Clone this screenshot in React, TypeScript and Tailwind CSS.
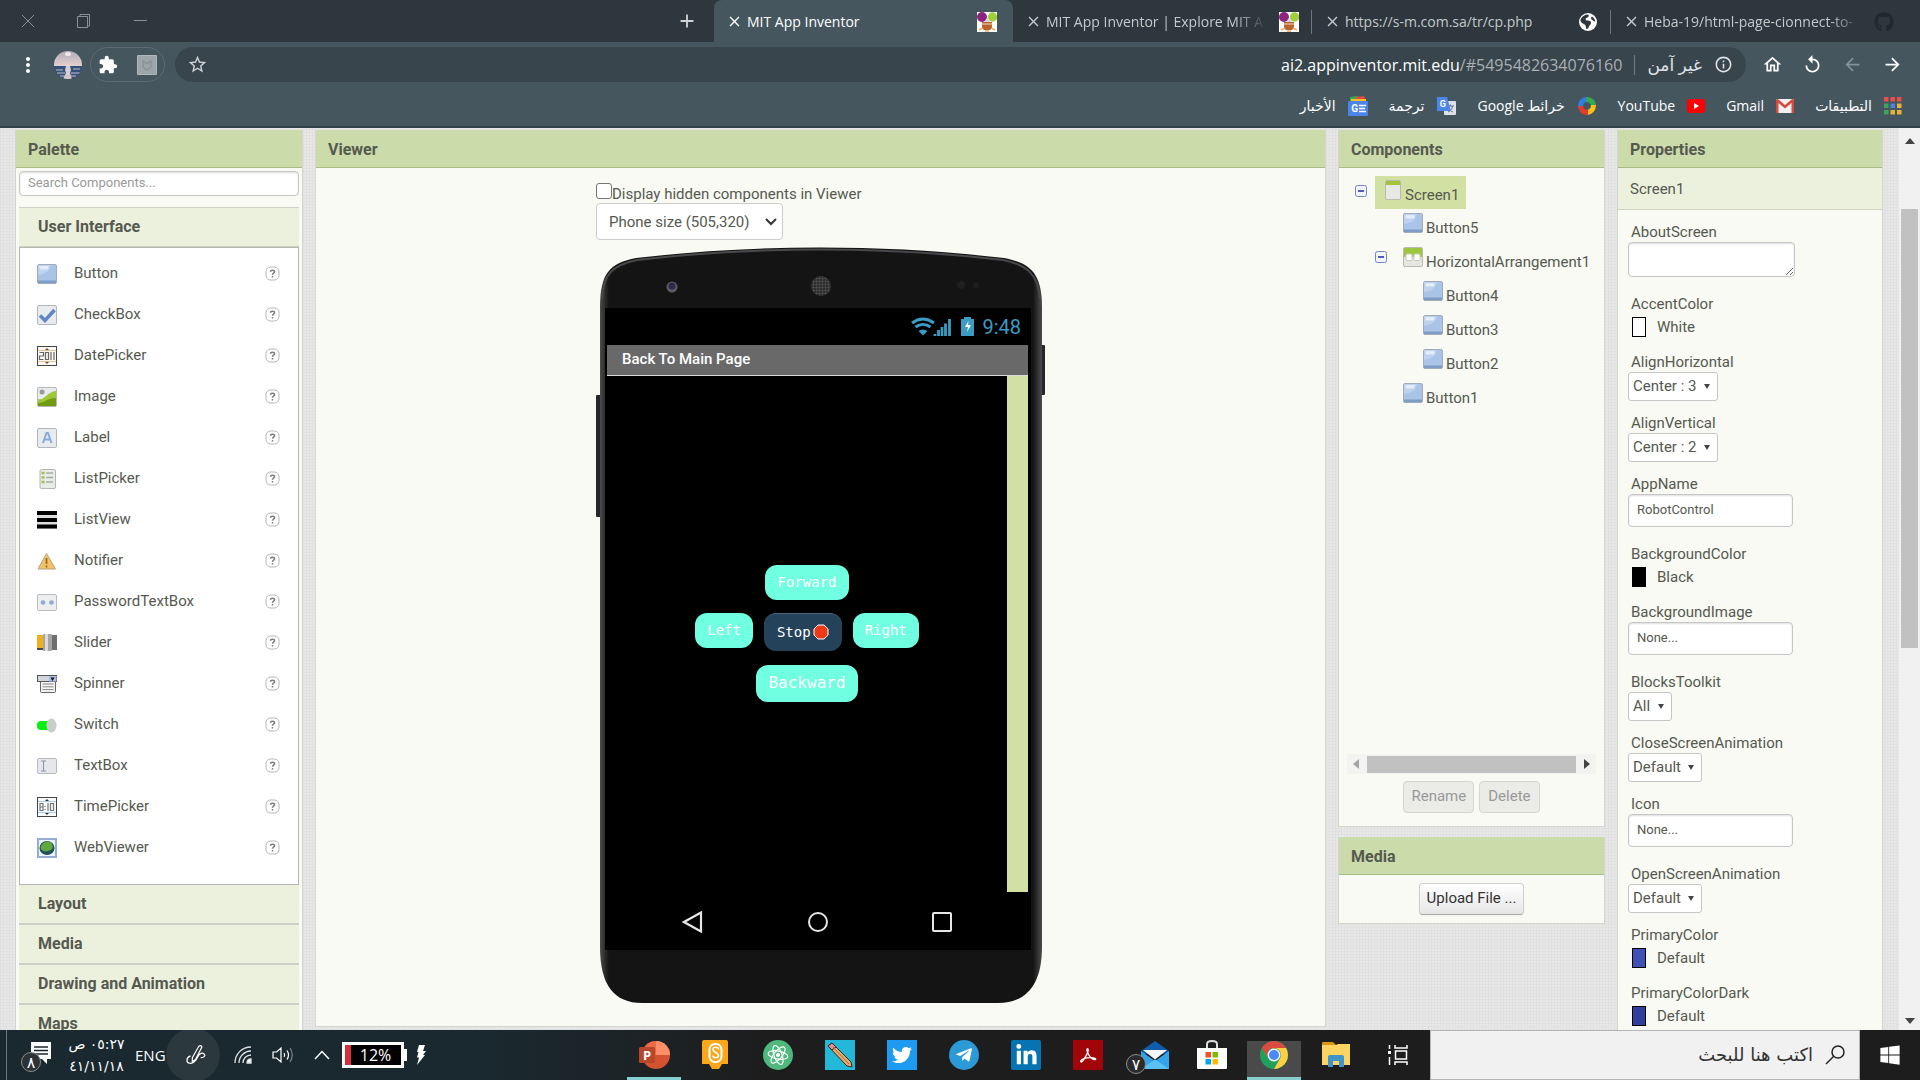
import React from "react";
import { FaGithub, FaTwitter, FaTelegramPlane, FaLinkedinIn, FaWindows } from "react-icons/fa";
import { MdExtension, MdStarBorder, MdClose, MdAdd, MdOutlineHome, MdReplay, MdArrowBack, MdArrowForward, MdInfoOutline, MdMoreVert } from "react-icons/md";

const UI = "font-['Open_Sans','DejaVu_Sans',sans-serif]";

/* ---------- browser window ---------- */

function InventorFavicon() {
  return (
    <svg viewBox="0 0 20 20" className="size-5 shrink-0" aria-hidden="true">
      <rect width="20" height="20" fill="#fff" />
      <circle cx="5" cy="5" r="5" fill="#8e2380" />
      <circle cx="15.5" cy="5" r="4.7" fill="#a0cf3c" />
      <path d="M10 6l3 4H7z" fill="#d9d0e0" />
      <path d="M5 10h10v6l-2 2H7l-2-2z" fill="#b7642f" />
      <path d="M5 12h10" stroke="#e8c9a8" strokeWidth="1.2" />
      <path d="M2 18l4-2M18 18l-4-2M8 19h4" stroke="#f0a868" strokeWidth="1.5" />
    </svg>
  );
}

function GlobeFavicon() {
  return (
    <svg viewBox="0 0 20 20" className="size-5 shrink-0" aria-hidden="true">
      <circle cx="10" cy="10" r="9" fill="#fff" />
      <path d="M9 2.500c3 .5 2 2.500-.2 3.200C7 6.500 7.500 8.500 9.500 8.500c3 0 3.500 1 3.500 2.500s-1.500 2-2 3.500-1.500 3-2.500 2.500-.2-3-1.500-4.200S3 11 2.500 9 5 3 9 2.500z" fill="#2d373d" />
      <path d="M14 4.500c1.800 1 3 3 3.300 5-1.800.2-2.300-1-3.300-1.700s-1.500-2.300 0-3.300z" fill="#2d373d" />
    </svg>
  );
}

type TabProps = { title: string; active?: boolean; faded?: boolean; divider?: boolean; icon: React.ReactNode };

function Tab({ title, active, faded, divider, icon }: TabProps) {
  return (
    <div
      className={
        "flex h-full w-[299px] shrink-0 items-center pt-px pr-4 pl-3 " +
        (active ? "rounded-t-lg bg-[#45565f] text-white" : "text-[#c4c9cb]")
      }
    >
      <button type="button" aria-label={"Close " + title} className="mr-1 shrink-0">
        <MdClose className="size-[17px]" />
      </button>
      <a
        href="#tab"
        className={
          "min-w-0 flex-1 text-sm whitespace-nowrap " +
          (faded ? "[mask-image:linear-gradient(to_right,black_85%,transparent)]" : "")
        }
      >
        {title}
      </a>
      <span className="ml-3">{icon}</span>
      {divider && <span className="-mr-4 ml-3 h-6 w-px bg-[#6d767b]" />}
    </div>
  );
}

function TabStrip() {
  return (
    <div className="flex h-[42px] items-center bg-[#2d373d] text-[#8a9296]">
      <div className="flex items-center gap-10 pl-5">
        <button type="button" aria-label="Close window">
          <svg viewBox="0 0 16 16" className="size-4" stroke="currentColor" fill="none"><path d="M2 2l12 12M14 2L2 14" /></svg>
        </button>
        <button type="button" aria-label="Restore window">
          <svg viewBox="0 0 16 16" className="size-4" stroke="currentColor" fill="none"><path d="M1.500 3.500h10v11h-10zM4 3V1.500h9.500V13H12" /></svg>
        </button>
        <button type="button" aria-label="Minimise window">
          <svg viewBox="0 0 16 16" className="size-4" stroke="currentColor" fill="none"><path d="M2 7.500h13" /></svg>
        </button>
      </div>
      <button type="button" aria-label="New tab" className="mr-4 ml-auto text-[#cfd3d5]">
        <MdAdd className="size-[22px]" />
      </button>
      <div className="flex h-full pr-2.5">
        <Tab active title="MIT App Inventor" icon={<InventorFavicon />} />
        <Tab faded divider title="MIT App Inventor | Explore MIT A" icon={<InventorFavicon />} />
        <Tab divider title="https://s-m.com.sa/tr/cp.php" icon={<GlobeFavicon />} />
        <Tab faded title="Heba-19/html-page-cionnect-to-" icon={<FaGithub className="size-5 text-[#20292e]" />} />
      </div>
    </div>
  );
}

function Toolbar() {
  return (
    <div className="flex h-[45px] items-center bg-[#45565f] text-white">
      <button type="button" aria-label="Menu" className="ml-4">
        <MdMoreVert className="size-6" />
      </button>
      <button type="button" aria-label="Profile" className="ml-[14px]">
        <svg viewBox="0 0 28 28" className="size-7">
          <defs>
            <clipPath id="avatar"><circle cx="14" cy="14" r="14" /></clipPath>
            <linearGradient id="sky" x2="0" y2="1">
              <stop offset="0" stopColor="#b0acb8" />
              <stop offset="1" stopColor="#e6d0cc" />
            </linearGradient>
          </defs>
          <g clipPath="url(#avatar)">
            <rect width="28" height="15" fill="url(#sky)" />
            <ellipse cx="14" cy="3" rx="3" ry="2" fill="#ece6ea" />
            <rect y="15" width="28" height="13" fill="#35507a" />
            <path d="M12 15h4l1 4-1 3 2 6H9l3-6-1-3z" fill="#e8dcd8" opacity=".9" />
            <path d="M2 19h7M19 18h7M3 22h8M17 22h9M6 25h16" stroke="#c5bcc6" />
          </g>
        </svg>
      </button>
      <div className="ml-2 flex h-[35px] w-[75px] items-center justify-between rounded-full border border-[#5c6b74] px-[7px]">
        <button type="button" aria-label="Extensions"><MdExtension className="size-5" /></button>
        <button type="button" aria-label="McAfee">
          <svg viewBox="0 0 20 20" className="size-5">
            <rect width="20" height="20" rx="1" fill="#9ca5a9" />
            <rect x=".5" y=".5" width="19" height="19" rx="1" fill="none" stroke="#b0b8bb" />
            <path d="M6 6l4 2.500L14 6v6l-4 3-4-3z" fill="none" stroke="#8b9599" strokeWidth="1.500" />
          </svg>
        </button>
      </div>
      <div className="ml-2.5 flex h-[35px] min-w-0 flex-1 items-center rounded-full bg-[#39454c] pr-[13px] pl-3">
        <button type="button" aria-label="Bookmark this page"><MdStarBorder className="size-[21px] text-[#cdd3d6]" /></button>
        <div className="ml-auto text-base whitespace-nowrap">
          ai2.appinventor.mit.edu<span className="text-[#a9b0b4]">/#5495482634076160</span>
        </div>
        <span className="mx-3 h-5 w-px bg-[#707b81]" />
        <span dir="rtl" className="text-[17px] whitespace-nowrap text-[#dfe3e5]">غير آمن</span>
        <MdInfoOutline className="ml-3 size-[19px] text-[#dfe3e5]" />
      </div>
      <div className="ml-4 flex items-center gap-[19px] pr-[17px]">
        <button type="button" aria-label="Home"><MdOutlineHome className="size-[21px]" /></button>
        <button type="button" aria-label="Reload"><MdReplay className="size-[21px]" /></button>
        <button type="button" aria-label="Back"><MdArrowBack className="size-[21px] text-[#82909a]" /></button>
        <button type="button" aria-label="Forward"><MdArrowForward className="size-[21px]" /></button>
      </div>
    </div>
  );
}

const bookmarks: { text: string; icon: React.ReactNode }[] = [
  {
    text: "التطبيقات",
    icon: (
      <svg viewBox="0 0 18 18" className="size-[18px]">
        {["#e8514a", "#e8514a", "#e8514a", "#3fa35c", "#4688e0", "#e5b23c", "#3fa35c", "#e5b23c", "#e5b23c"].map((c, i) => (
          <rect key={i} x={(i % 3) * 6.5} y={Math.floor(i / 3) * 6.5} width="4.5" height="4.5" fill={c} />
        ))}
      </svg>
    ),
  },
  {
    text: "Gmail",
    icon: (
      <svg viewBox="0 0 18 18" className="size-[18px]">
        <rect y="2" width="18" height="14" rx="1" fill="#f1f1f1" />
        <path d="M0 16V3.500C0 2 1.500 1.800 2.500 2.500L9 8l6.500-5.500c1-.7 2.500-.5 2.500 1V16h-2.500V6L9 11.500 2.500 6v10z" fill="#d54b3d" />
      </svg>
    ),
  },
  {
    text: "YouTube",
    icon: (
      <svg viewBox="0 0 18 18" className="size-[18px]">
        <rect y="2" width="18" height="14" rx="3" fill="#f00" />
        <path d="M7 6l5 3-5 3z" fill="#fff" />
      </svg>
    ),
  },
  {
    text: "خرائط Google",
    icon: (
      <svg viewBox="0 0 20 20" className="size-5" fill="none" strokeWidth="5">
        <path d="M3.500 11A6.500 6.500 0 0 1 10 3.500" stroke="#2f7de1" />
        <path d="M9 3.500c4 0 7 2 7.500 6" stroke="#35a853" />
        <path d="M16.500 9c0 4-2.500 7-6.500 7.500" stroke="#fbc116" />
        <path d="M11 16.500c-4 0-7-2-7.500-6.500" stroke="#e33b2e" />
      </svg>
    ),
  },
  {
    text: "ترجمة",
    icon: (
      <svg viewBox="0 0 20 20" className="size-5">
        <rect x="8" y="5" width="12" height="14" rx="1" fill="#dfe2e6" />
        <path d="M11 10h7M14.500 8.500V10M12 16c3-1 4-3 4.500-6M12.500 12c1 2 2.500 3.500 4.500 4" stroke="#6b7783" fill="none" />
        <path d="M1 1h10l4 14H1z" fill="#4a86e8" />
        <text x="10" y="11" fontSize="9" fontFamily="Roboto" fontWeight="700" fill="#fff">G</text>
      </svg>
    ),
  },
  {
    text: "الأخبار",
    icon: (
      <svg viewBox="0 0 20 20" className="size-5">
        <path d="M2 1l8-1v6H2z" fill="#35a853" />
        <path d="M8 1l8-1 2 6H8z" fill="#e5473a" />
        <path d="M3 3h15v5H3z" fill="#f6bf26" />
        <rect y="5" width="20" height="15" rx="1" fill="#4a86e8" />
        <text x="10" y="16" fontSize="10" fontFamily="Roboto" fontWeight="700" fill="#fff">G</text>
        <path d="M11 9.500h7M11 12.500h6M11 15.500h7" stroke="#fff" strokeWidth="1.5" />
      </svg>
    ),
  },
];

function BookmarksBar() {
  return (
    <nav dir="rtl" className="flex h-[41px] items-center gap-[21px] border-b-2 border-[#33434d] bg-[#45565f] pr-[18px] pb-0.5 text-sm text-white">
      {bookmarks.map((b) => (
        <a key={b.text} href="#bookmark" className="flex items-center gap-3 whitespace-nowrap">
          {b.icon}
          {b.text}
        </a>
      ))}
    </nav>
  );
}

/* ---------- shared pieces ---------- */

function PanelHeader({ children }: { children: React.ReactNode }) {
  return (
    <h2 className="flex h-[38px] items-center border-b border-[#a9bd84] bg-[#cbdba9] px-3 pt-0.5 text-base font-bold text-[#555950]">
      {children}
    </h2>
  );
}

function ButtonIcon() {
  return (
    <svg viewBox="0 0 20 20" className="size-5 shrink-0">
      <rect x=".5" y=".5" width="19" height="19" rx="1.5" fill="#a9c4e6" stroke="#a0acba" />
      <path d="M1 11C8 10 12 8 14 1H1z" fill="#bcd2ee" />
      <rect x="2.5" y="2" width="9" height="3.5" rx="1" fill="#e3edf9" />
      <path d="M1 16.500h18V19H1z" fill="#7e9cc6" />
    </svg>
  );
}

/* ---------- palette ---------- */

const frame = <rect x=".5" y=".5" width="19" height="19" rx="1.5" fill="#e9ecef" stroke="#b4b8bb" />;

const paletteItems: { name: string; icon: React.ReactNode }[] = [
  { name: "Button", icon: <ButtonIcon /> },
  {
    name: "CheckBox",
    icon: <svg viewBox="0 0 20 20" className="size-5">{frame}<path d="M3 10.500l5 5L17.500 5" fill="none" stroke="#5f87c4" strokeWidth="3.5" /></svg>,
  },
  {
    name: "DatePicker",
    icon: (
      <svg viewBox="0 0 20 20" className="size-5">
        <rect x=".5" y=".5" width="19" height="19" fill="#fdfaf5" stroke="#444" />
        <path d="M1 4.500h18M1 15.500h18" stroke="#e7bd90" />
        <path d="M8 4l2-2 2 2zM8 16l2 2 2-2z" fill="#7a4a2a" />
        <path d="M2.500 6.500h4v3.500h-4v3.500h4M8.500 6.500h3v7h-3zM14 6v8M17 6v8" fill="none" stroke="#666" strokeWidth="1.2" />
      </svg>
    ),
  },
  {
    name: "Image",
    icon: (
      <svg viewBox="0 0 20 20" className="size-5">
        {frame}
        <path d="M1 12c7 2 8-7 18-8v15H1z" fill="#9cc832" />
        <path d="M1 16c7 0 9-5 18-5v8H1z" fill="#6f9a12" />
        <circle cx="5" cy="5" r="2.5" fill="#9a9a9a" />
      </svg>
    ),
  },
  {
    name: "Label",
    icon: <svg viewBox="0 0 20 20" className="size-5">{frame}<path d="M6 15l3.500-10h1.500L14.500 15M7.500 11.500h5.500" fill="none" stroke="#8aaade" strokeWidth="2" /></svg>,
  },
  {
    name: "ListPicker",
    icon: (
      <svg viewBox="0 0 20 20" className="size-5">
        <rect x="3" y=".5" width="15.5" height="19" rx="1.5" fill="#e8ece6" stroke="#b4b8b0" />
        <path d="M9 4h7M9 8.500h7M9 13h7" stroke="#a8aaa6" strokeWidth="1.3" />
        <path d="M4.500 4h3M4.500 8.500h3M4.500 13h3" stroke="#9dc050" strokeWidth="2.5" />
      </svg>
    ),
  },
  {
    name: "ListView",
    icon: (
      <svg viewBox="0 0 20 20" className="size-5">
        <rect y="1" width="20" height="18" fill="#ddd" />
        <path d="M0 3h20M0 10h20M0 16.500h20" stroke="#000" strokeWidth="3.8" />
      </svg>
    ),
  },
  {
    name: "Notifier",
    icon: (
      <svg viewBox="0 0 20 20" className="size-5">
        <path d="M9.500 2.500L18.500 18H1z" fill="#f2c26a" stroke="#b9a078" />
        <path d="M9.500 7v6M9.500 14.500v2" stroke="#9a6a1c" strokeWidth="1.8" />
      </svg>
    ),
  },
  {
    name: "PasswordTextBox",
    icon: (
      <svg viewBox="0 0 20 20" className="size-5">
        <rect x=".5" y="2.5" width="19" height="16" rx="1.5" fill="#eceef0" stroke="#b9bcbf" />
        <circle cx="6" cy="10.5" r="2.3" fill="#8daad4" /><circle cx="14.5" cy="10.5" r="2.3" fill="#8daad4" />
      </svg>
    ),
  },
  {
    name: "Slider",
    icon: (
      <svg viewBox="0 0 20 20" className="size-5">
        <rect y="2" width="7" height="15" fill="#efb01c" /><rect y="15" width="20" height="2" fill="#4a4a4a" />
        <rect x="14" y="2" width="6" height="15" fill="#6f6f6f" />
        <rect x="6" y="1" width="9" height="17" rx="1" fill="#a5a5a5" /><rect x="8" y="1" width="3" height="17" fill="#dadada" />
      </svg>
    ),
  },
  {
    name: "Spinner",
    icon: (
      <svg viewBox="0 0 20 20" className="size-5">
        <rect x="3.5" y="6.5" width="15" height="12" rx="1" fill="#f4f4f4" stroke="#666" />
        <path d="M5.500 10h11M5.500 12.800h11M5.500 15.600h11" stroke="#888" />
        <rect x=".5" y="1.5" width="19" height="6" fill="#d2d5da" stroke="#555" />
        <rect x="12" y="2" width="7.5" height="5.5" fill="#a9bbe6" /><path d="M13.500 3.500h4L15.500 7z" fill="#111" />
      </svg>
    ),
  },
  {
    name: "Switch",
    icon: <svg viewBox="0 0 20 20" className="size-5"><rect y="6" width="17" height="9" rx="4" fill="#0aef12" /><ellipse cx="14.5" cy="10.5" rx="5" ry="7" fill="#ccc" /></svg>,
  },
  {
    name: "TextBox",
    icon: (
      <svg viewBox="0 0 20 20" className="size-5">
        <rect x=".5" y="2.5" width="19" height="15" rx="1.5" fill="#e6e7ec" stroke="#b9bcbf" />
        <path d="M4 5h5M4 15h5M6.500 5v10" stroke="#8793ab" fill="none" />
      </svg>
    ),
  },
  {
    name: "TimePicker",
    icon: (
      <svg viewBox="0 0 20 20" className="size-5">
        <rect x=".5" y=".5" width="19" height="19" fill="#f7fafd" stroke="#444" />
        <path d="M1 4.500h18M1 15.500h18" stroke="#a9cbe8" />
        <path d="M8 4l2-2 2 2zM8 16l2 2 2-2z" fill="#333" />
        <path d="M3 6.500h3v7H3zM3 10h3M8 9v1M8 12v1M11 6v8M13.500 6.500h3v7h-3z" fill="none" stroke="#777" strokeWidth="1.2" />
      </svg>
    ),
  },
  {
    name: "WebViewer",
    icon: (
      <svg viewBox="0 0 20 20" className="size-5">
        <rect x="1" y="1" width="18" height="18" fill="#edf3fb" stroke="#94abd2" strokeWidth="2" />
        <ellipse cx="10" cy="10" rx="7.5" ry="7" fill="#1f4f57" />
        <path d="M4 8c2-5 9-6 11-2s0 6-4 7-9-1-7-5z" fill="#63a83c" />
      </svg>
    ),
  },
];

function Palette() {
  return (
    <aside className="w-72 shrink-0 border-x border-[#d3d6cd] bg-[#f8faf3]">
      <PanelHeader>Palette</PanelHeader>
      <div className="px-[3px]">
        <input
          type="search"
          aria-label="Search Components"
          placeholder="Search Components..."
          className="mt-[3px] block h-[25px] w-full rounded border border-[#c6c6c6] bg-white px-2 pb-0.5 text-[13px] shadow-[inset_0_1px_2px_#ddd] placeholder:text-[#999]"
        />
        <button type="button" className="mt-[11px] flex h-10 w-full items-center border-y border-[#ccd1c4] bg-[#ecf1de] px-[19px] text-base font-bold text-[#555950]">
          User Interface
        </button>
        <ul className="border border-[#b5b8b0] bg-white pt-[5px] pb-4">
          {paletteItems.map((item) => (
            <li key={item.name} className="flex h-[41px] items-center pr-[18px] pl-[17px]">
              {item.icon}
              <button type="button" className="ml-[17px] text-[15px]">{item.name}</button>
              <button type="button" aria-label={"Help for " + item.name} className="ml-auto">
                <svg viewBox="0 0 15 15" className="size-[15px]">
                  <rect x="1" y="1" width="13" height="13" rx="4.5" fill="#fff" stroke="#b5b5b5" />
                  <path d="M5.500 5.800c0-2.200 4-2.200 4 0 0 1.400-2 1.300-2 2.900M7.500 10v1.500" fill="none" stroke="#7c7c7c" strokeWidth="1.5" />
                </svg>
              </button>
            </li>
          ))}
        </ul>
        {["Layout", "Media", "Drawing and Animation", "Maps"].map((name) => (
          <button key={name} type="button" className="flex h-10 w-full items-center border-b-2 border-[#ccd1cc] bg-[#ecf1de] px-[19px] text-base font-bold text-[#555950]">
            {name}
          </button>
        ))}
      </div>
    </aside>
  );
}

/* ---------- viewer ---------- */

function PhoneBody() {
  return (
    <svg viewBox="0 0 449 756" className="absolute inset-0 size-full" aria-hidden="true">
      <defs>
        <linearGradient id="edge">
          <stop offset="0" stopColor="#4c4c4e" /><stop offset=".02" stopColor="#141414" />
          <stop offset=".98" stopColor="#141414" /><stop offset="1" stopColor="#4c4c4e" />
        </linearGradient>
        <pattern id="mesh" width="3" height="3" patternUnits="userSpaceOnUse"><rect width="3" height="3" fill="#2c2c2c" /><circle cx="1.5" cy="1.5" r="1" fill="#555" /></pattern>
      </defs>
      <rect y="148" width="6" height="122" rx="1" fill="#26272a" />
      <rect x="443" y="98" width="6" height="50" rx="1" fill="#26272a" />
      <path d="M4 60C4 26 14 16 40 11C160-3 288-3 408 11C434 16 446 26 446 60V700C446 738 430 756 402 756H46C18 756 4 738 4 700z" fill="url(#edge)" />
      <path d="M6 52C7 28 16 18 41 13C160-1 288-1 407 13C432 18 442 28 444 52" fill="none" stroke="#48494b" strokeWidth="2" />
      <circle cx="76" cy="40" r="5.5" fill="#5d5d61" /><circle cx="76" cy="39" r="3.5" fill="#2c2950" />
      <circle cx="225" cy="39" r="10" fill="url(#mesh)" />
      <circle cx="365" cy="38" r="4" fill="#1f1f1f" /><circle cx="380" cy="38" r="3" fill="#1f1f1f" />
      <rect x="9" y="61" width="426" height="642" fill="#000" />
    </svg>
  );
}

function PadButton({ children, large }: { children: string; large?: boolean }) {
  return (
    <button
      type="button"
      className={
        "rounded-xl bg-[#70ffe0] px-3 font-['DejaVu_Sans_Mono',monospace] text-white " +
        (large ? "h-[37px] text-base" : "h-[35px] text-sm")
      }
    >
      {children}
    </button>
  );
}

function Phone() {
  return (
    <div className="relative mt-[7px] h-[756px]">
      <PhoneBody />
      <div className="relative pt-[61px] pr-[17px] pl-[11px]">
        <div className="flex h-[37px] items-center justify-end pr-[7px] text-[#3a9cc2]">
          <svg viewBox="0 0 24 18" className="h-[19px] w-6" fill="none" stroke="currentColor" strokeWidth="3">
            <path d="M1 5.500C8 .5 16 .5 23 5.500M4.500 9.500c4.500-3.500 10.500-3.500 15 0" />
            <path d="M7.500 13.500c3-2 6-2 9 0L12 18z" fill="currentColor" stroke="none" />
          </svg>
          <svg viewBox="0 0 18 18" className="mr-2.5 -ml-0.5 size-[18px]" fill="none" stroke="currentColor" strokeWidth="2.8">
            <path d="M2 18v-2M5.500 18v-6M9 18V9M12.500 18V5.500M16.500 18V1" />
          </svg>
          <svg viewBox="0 0 13 19" className="mr-2 h-[19px] w-[13px]">
            <path d="M0 2h3V0h7v2h3v17H0z" fill="currentColor" />
            <path d="M7.500 4l-3.500 6h3l-1 5 4-7H7z" fill="#fff" />
          </svg>
          <span className="text-xl">9:48</span>
        </div>
        <div className="flex h-[31px] items-center border-b border-[#ddd] bg-[#696969] px-[15px] pb-0.5 text-[15px] font-medium text-white">Back To Main Page</div>
        <div className="flex h-[516px]">
          <div className="flex flex-1 flex-col items-center justify-center pb-0.5">
            <PadButton>Forward</PadButton>
            <div className="mt-[13px] mb-[14px] flex items-start gap-[11px]">
              <PadButton>Left</PadButton>
              <button type="button" className="flex h-[38px] items-center gap-0.5 rounded-xl border-t border-[#4a6478] bg-[#24435a] px-[13px] font-['DejaVu_Sans_Mono',monospace] text-sm text-white">
                Stop
                <svg viewBox="0 0 16 16" className="size-4"><path d="M5 1h6l4 4v6l-4 4H5l-4-4V5z" fill="#ee3a17" stroke="#fff" /></svg>
              </button>
              <PadButton>Right</PadButton>
            </div>
            <PadButton large>Backward</PadButton>
          </div>
          <div className="w-[21px] bg-[#d2e0a4]" />
        </div>
        <div className="flex h-[60px] items-center justify-between px-[75px]">
          <svg viewBox="0 0 22 22" className="size-[22px]" fill="none" stroke="#e6e6e6" strokeWidth="2.2"><path d="M19 1.500v19L2 11z" /></svg>
          <svg viewBox="0 0 22 22" className="size-[22px]" fill="none" stroke="#e6e6e6" strokeWidth="2"><circle cx="11" cy="11" r="9" /></svg>
          <svg viewBox="0 0 22 22" className="size-[22px]" fill="none" stroke="#e6e6e6" strokeWidth="2"><rect x="2" y="2" width="18" height="18" rx="1" /></svg>
        </div>
      </div>
    </div>
  );
}

function Viewer() {
  return (
    <main className="min-w-0 flex-1 self-start border-x border-b border-[#d3d6cd] bg-[#f8faf3]">
      <PanelHeader>Viewer</PanelHeader>
      <div className="mx-auto w-[449px] pt-[15px] pb-[23px]">
        <label className="flex h-5 items-end text-[15px] leading-none">
          <input type="checkbox" className="mb-1 size-4 appearance-none rounded-[3px] border border-[#767676] bg-white" />
          <span className="pb-px">Display hidden components in Viewer</span>
        </label>
        <div className="relative w-[187px]">
          <select aria-label="Phone size" className="block h-[37px] w-full appearance-none rounded border border-[#ccc] bg-white pt-px pl-3 text-[15px]">
            <option>Phone size (505,320)</option>
          </select>
          <svg viewBox="0 0 12 8" className="pointer-events-none absolute top-[15px] right-1.5 h-2 w-3" fill="none" stroke="#333" strokeWidth="2"><path d="M1 1l5 5 5-5" /></svg>
        </div>
        <Phone />
      </div>
    </main>
  );
}

/* ---------- components tree ---------- */

function Collapse({ name }: { name: string }) {
  return (
    <button type="button" aria-label={"Collapse " + name} className="block shrink-0">
      <svg viewBox="0 0 12 12" className="size-3">
        <rect x=".5" y=".5" width="11" height="11" rx="2" fill="#f1f3fd" stroke="#7784c4" /><path d="M3 6h6" stroke="#1c2aa0" strokeWidth="1.5" />
      </svg>
    </button>
  );
}

function Leaf({ name }: { name: string }) {
  return (
    <li className="flex h-[34px] items-start gap-[3px] pt-1">
      <ButtonIcon />
      <button type="button" className="pt-1 text-[15px]">{name}</button>
    </li>
  );
}

function ComponentTree() {
  return (
    <div className="h-[586px] pt-2 pl-4">
      <div className="flex h-[33px] items-center gap-2">
        <div className="pb-1"><Collapse name="Screen1" /></div>
        <button type="button" className="flex h-[33px] items-start gap-[3px] bg-[#d2e0a4] pt-1 pr-[7px] pl-[9px] text-[15px]">
          <svg viewBox="0 0 18 20" className="h-5 w-[18px]">
            <rect x="1.5" y=".5" width="15" height="19" rx="1.5" fill="#e8e8e4" stroke="#b9bbaf" /><path d="M2 1h14v4H2z" fill="#a3c33c" />
          </svg>
          <span className="pt-1">Screen1</span>
        </button>
      </div>
      <ul className="pl-12">
        <Leaf name="Button5" />
        <li>
          <div className="-ml-7 flex h-[34px] items-start gap-[3px] pt-1">
            <div className="w-[25px] pt-1"><Collapse name="HorizontalArrangement1" /></div>
            <svg viewBox="0 0 20 20" className="size-5 shrink-0">
              <rect x=".5" y=".5" width="19" height="19" rx="1.5" fill="#e6e6e2" stroke="#b9bbaf" />
              <path d="M1 1h18v9H1z" fill="#9dc63e" /><rect x="3" y="7" width="6" height="6.5" rx="1" fill="#fff" stroke="#c6cbbb" /><rect x="11" y="7" width="6" height="6.5" rx="1" fill="#fff" stroke="#c6cbbb" />
            </svg>
            <button type="button" className="pt-1 text-[15px]">HorizontalArrangement1</button>
          </div>
          <ul className="pl-5">
            <Leaf name="Button4" />
            <Leaf name="Button3" />
            <Leaf name="Button2" />
          </ul>
        </li>
        <Leaf name="Button1" />
      </ul>
    </div>
  );
}

function Components() {
  return (
    <div className="flex w-[267px] shrink-0 flex-col gap-2.5">
      <section className="border-x border-b border-[#d3d6cd] bg-[#f8faf3]">
        <PanelHeader>Components</PanelHeader>
        <ComponentTree />
        <div className="mx-2 flex h-5 items-center gap-2 bg-[#f3f3f1] px-1.5">
          <svg viewBox="0 0 6 10" className="h-2.5 w-1.5"><path d="M6 0v10L0 5z" fill="#a3a3a3" /></svg>
          <div className="h-[17px] flex-1 bg-[#c1c1c1]" />
          <svg viewBox="0 0 6 10" className="h-2.5 w-1.5"><path d="M0 0v10l6-5z" fill="#444" /></svg>
        </div>
        <div className="mt-[7px] mb-[13px] flex justify-center gap-[5px]">
          <button type="button" disabled className="h-8 rounded border border-[#d5d5d2] bg-[#ebebe8] px-[7px] pb-0.5 text-[15px] text-[#999]">Rename</button>
          <button type="button" disabled className="h-8 rounded border border-[#d5d5d2] bg-[#ebebe8] px-2 pb-0.5 text-[15px] text-[#999]">Delete</button>
        </div>
      </section>
      <section className="border-x border-b border-[#d3d6cd] bg-[#f8faf3]">
        <PanelHeader>Media</PanelHeader>
        <div className="flex justify-center py-2">
          <button type="button" className="h-8 rounded border border-[#cfcfcf] border-b-[#aaa] bg-linear-to-b from-white to-[#e6e6e6] px-[7px] pb-0.5 text-[15px] text-[#333] shadow-xs">Upload File ...</button>
        </div>
      </section>
    </div>
  );
}

/* ---------- properties ---------- */

type Prop = { name: string; kind: "area" | "color" | "select" | "text"; value: string; swatch?: string };

const properties: Prop[] = [
  { name: "AboutScreen", kind: "area", value: "" },
  { name: "AccentColor", kind: "color", value: "White", swatch: "bg-white" },
  { name: "AlignHorizontal", kind: "select", value: "Center : 3" },
  { name: "AlignVertical", kind: "select", value: "Center : 2" },
  { name: "AppName", kind: "text", value: "RobotControl" },
  { name: "BackgroundColor", kind: "color", value: "Black", swatch: "bg-black" },
  { name: "BackgroundImage", kind: "text", value: "None..." },
  { name: "BlocksToolkit", kind: "select", value: "All" },
  { name: "CloseScreenAnimation", kind: "select", value: "Default" },
  { name: "Icon", kind: "text", value: "None..." },
  { name: "OpenScreenAnimation", kind: "select", value: "Default" },
  { name: "PrimaryColor", kind: "color", value: "Default", swatch: "bg-[#3f51b5]" },
  { name: "PrimaryColorDark", kind: "color", value: "Default", swatch: "bg-[#303f9f]" },
];

function Editor({ prop }: { prop: Prop }) {
  const id = "prop-" + prop.name;
  if (prop.kind === "area") {
    return <textarea id={id} className="-ml-[3px] mb-[5px] block h-[35px] w-[167px] rounded border border-[#c6c6c6] bg-white shadow-[inset_0_1px_2px_#ddd]" />;
  }
  if (prop.kind === "text") {
    return <input id={id} type="text" defaultValue={prop.value} className="-ml-[3px] mb-[5px] block h-[33px] w-[165px] rounded border border-[#c6c6c6] bg-white px-2 pb-0.5 text-[13px] shadow-[inset_0_1px_2px_#ddd]" />;
  }
  if (prop.kind === "color") {
    return (
      <button id={id} type="button" className="flex h-[26px] items-center gap-[11px] pl-px text-[15px]">
        <span className={"h-5 w-[14px] border border-black " + prop.swatch} />
        {prop.value}
      </button>
    );
  }
  return (
    <div className="relative -ml-[3px] w-fit">
      <select id={id} defaultValue={prop.value} className="block h-[29px] appearance-none rounded-[3px] border border-[#c6c6c6] bg-white pr-5 pb-px pl-1 text-[15px]">
        <option>{prop.value}</option>
      </select>
      <svg viewBox="0 0 6 5" className="pointer-events-none absolute top-3 right-2 h-[5px] w-1.5"><path d="M0 0h6L3 5z" fill="#444" /></svg>
    </div>
  );
}

function Properties() {
  return (
    <aside className="w-[266px] shrink-0 border-x border-[#d3d6cd] bg-[#f8faf3]">
      <PanelHeader>Properties</PanelHeader>
      <div className="flex h-[42px] items-center border-b border-[#cdd3c2] bg-[#ecf1de] px-3 pt-px text-[15px]">Screen1</div>
      <div className="flex flex-col gap-3 pt-3 pl-[13px]">
        {properties.map((p) => (
          <div key={p.name}>
            <label htmlFor={"prop-" + p.name} className="block h-5 text-[15px] leading-5">{p.name}</label>
            <Editor prop={p} />
          </div>
        ))}
      </div>
    </aside>
  );
}

function PageScrollbar() {
  return (
    <div className="flex w-[21px] shrink-0 flex-col items-center bg-[#f1f1f1] pt-2.5 pb-1.5">
      <svg viewBox="0 0 10 6" className="h-1.5 w-2.5"><path d="M0 6h10L5 0z" fill="#444" /></svg>
      <div className="mt-[65px] h-[439px] w-[17px] bg-[#c1c1c1]" />
      <svg viewBox="0 0 10 6" className="mt-auto h-1.5 w-2.5"><path d="M0 0h10L5 6z" fill="#444" /></svg>
    </div>
  );
}

/* ---------- taskbar ---------- */

const pinned: { name: string; state?: "open" | "active"; icon: React.ReactNode }[] = [
  {
    name: "PowerPoint",
    state: "open",
    icon: (
      <svg viewBox="0 0 32 32" className="size-8">
        <circle cx="18" cy="16" r="14" fill="#d35230" /><path d="M18 2a14 14 0 0 1 14 14H18z" fill="#ff8f6b" /><path d="M18 2A14 14 0 0 0 4 16h14z" fill="#ed6c47" />
        <rect x="1" y="8" width="16" height="16" rx="1.5" fill="#b7472a" />
        <text x="5" y="21" fontSize="13" fontFamily="Open Sans" fontWeight="700" fill="#fff">P</text>
      </svg>
    ),
  },
  {
    name: "Scratch",
    icon: (
      <svg viewBox="0 0 32 32" className="size-8">
        <path d="M4 1h22q2 0 2 2v22h-6l-3 5h-7l-3-5H2V3q0-2 2-2z" fill="#fba71b" />
        <rect x="8.5" y="4" width="14" height="20" rx="6.5" fill="#fff" />
        <rect x="10.5" y="6" width="10" height="16" rx="4.5" fill="#fba71b" />
        <path d="M18.500 10.500c0-3-5.500-3-5.500 0s5.500 3 5.500 6-5.500 3-5.500 0" fill="none" stroke="#fff" strokeWidth="1.6" />
      </svg>
    ),
  },
  {
    name: "Atom",
    icon: (
      <svg viewBox="0 0 30 30" className="size-[30px]" fill="none" stroke="#fff" strokeWidth="1.2">
        <circle cx="15" cy="15" r="15" fill="#4db97c" stroke="none" />
        <ellipse cx="15" cy="15" rx="10" ry="4" transform="rotate(10 15 15)" />
        <ellipse cx="15" cy="15" rx="10" ry="4" transform="rotate(70 15 15)" />
        <ellipse cx="15" cy="15" rx="10" ry="4" transform="rotate(130 15 15)" />
        <circle cx="15" cy="15" r="1.5" fill="#fff" />
      </svg>
    ),
  },
  {
    name: "Pencil",
    icon: (
      <svg viewBox="0 0 30 30" className="size-[30px]">
        <rect width="30" height="30" fill="#23b8d8" />
        <path d="M3 6l4-3 19 19 1 5-5-1z" fill="#e8ab6c" stroke="#3b2a22" /><path d="M3 6l4-3 4 4-4 3z" fill="#e88a94" stroke="#3b2a22" /><path d="M8 7l16 17" stroke="#a8703c" />
      </svg>
    ),
  },
  { name: "Twitter", icon: <span className="flex size-[30px] items-center justify-center bg-[#1d9bf0] text-white"><FaTwitter className="size-5" /></span> },
  { name: "Telegram", icon: <span className="flex size-[30px] items-center justify-center rounded-full bg-[#2b9ad6] text-white"><FaTelegramPlane className="size-[18px]" /></span> },
  { name: "LinkedIn", icon: <span className="flex size-[30px] items-center justify-center rounded-xs bg-[#0674b3] text-white"><FaLinkedinIn className="size-[23px]" /></span> },
  {
    name: "Acrobat",
    icon: (
      <svg viewBox="0 0 30 30" className="size-[30px]">
        <rect width="30" height="30" fill="#a10509" />
        <path d="M14.500 9c-1.500 0 0 4 2 7s5 4 6 3.500-1-2-5-1.800-8.500 1.300-9.500 3 .8 2 2.500-.7 4-6.500 4.500-8.500.2-2.500-.5-2.500z" fill="none" stroke="#fff" strokeWidth="1.3" />
      </svg>
    ),
  },
  {
    name: "Mail",
    icon: (
      <span className="relative">
        <svg viewBox="0 0 30 30" className="ml-2.5 size-[30px]">
          <path d="M1 11L15 1l14 10v3H1z" fill="#0f5dab" /><path d="M1 11v18h28V11L15 21z" fill="#35a3e8" /><path d="M1 29L15 19.500 29 29z" fill="#5bc1f5" /><path d="M3 10h24L15 19.500z" fill="#f4f6f8" />
        </svg>
        <span dir="rtl" className="absolute top-3.5 -left-1 flex size-5 items-center justify-center rounded-full border border-[#8c8c8c] bg-[#2b2b2b] text-base leading-none text-white">٧</span>
      </span>
    ),
  },
  {
    name: "Microsoft Store",
    icon: (
      <svg viewBox="0 0 30 30" className="size-[30px]">
        <path d="M10 8V4q0-3 5-3t5 3v4" fill="none" stroke="#ddd" strokeWidth="2" /><path d="M0 8h30v20q0 1-1 1H1q-1 0-1-1z" fill="#fff" />
        <path d="M8.500 12H14v5.500H8.500z" fill="#f25022" /><path d="M15.500 12H21v5.500h-5.500z" fill="#7fba00" /><path d="M8.500 19H14v5.500H8.500z" fill="#00a4ef" /><path d="M15.500 19H21v5.500h-5.500z" fill="#ffb900" />
      </svg>
    ),
  },
  {
    name: "Chrome",
    state: "active",
    icon: (
      <svg viewBox="0 0 28 28" className="size-7">
        <circle cx="14" cy="14" r="14" fill="#1fa15d" />
        <path d="M1.900 7A14 14 0 0 1 26.100 7H14a7 7 0 0 0-6 10.500z" fill="#dd4b3e" />
        <path d="M26.100 7A14 14 0 0 1 14 28l6-10.500A7 7 0 0 0 14 7z" fill="#ffce44" />
        <circle cx="14" cy="14" r="6.5" fill="#f1f1f1" /><circle cx="14" cy="14" r="5" fill="#4a8af4" />
      </svg>
    ),
  },
  {
    name: "File Explorer",
    icon: (
      <svg viewBox="0 0 28 26" className="h-[26px] w-7">
        <path d="M0 1q0-1 1-1h10l3 3H0z" fill="#d9970f" /><path d="M0 3h14l2-1h12v21H0z" fill="#fcd462" />
        <path d="M6 25V15q0-2 2-2h12q2 0 2 2v10h-5v-6h-6v6z" fill="#3f95c9" />
      </svg>
    ),
  },
  {
    name: "Task View",
    icon: (
      <svg viewBox="0 0 20 22" className="h-[22px] w-5" fill="none" stroke="#fff" strokeWidth="1.5">
        <path d="M7 1v3h12V1M7 21v-3h12v3M7.500 7h11v8h-11zM1.500 1v4M1.500 13v8" /><path d="M0 8.500h3" strokeWidth="3" />
      </svg>
    ),
  },
];

function Tray() {
  return (
    <div className="flex h-full items-center text-white">
      <span className="ml-1.5 h-full w-px bg-[#6d777d]" />
      <button type="button" aria-label="Notifications" className="relative ml-6">
        <svg viewBox="0 0 20 22" className="mb-1 h-[22px] w-5"><path d="M0 0h20v17h-4v5l-5-5H0z" fill="#fff" /><path d="M3 5h14M3 8.500h14M3 12h14" stroke="#1b262c" strokeWidth="1.3" /></svg>
        <span dir="rtl" className="absolute top-2.5 -left-2.5 flex size-5 items-center justify-center rounded-full border border-[#8c8c8c] bg-[#2b3338] text-base leading-none">٨</span>
      </button>
      <div className="ml-[17px] w-[57px] text-center font-['DejaVu_Sans',sans-serif] text-sm leading-[22px] whitespace-nowrap">
        <div dir="rtl">٠٥:٢٧ ص</div>
        <div>٤١/١١/١٨</div>
      </div>
      <button type="button" className="ml-2.5 text-[15px]">ENG</button>
      <button type="button" aria-label="Windows Ink" className="-my-1 flex size-[54px] items-center justify-center rounded-full bg-[#2b383e] pl-1.5">
        <svg viewBox="0 0 24 24" className="size-[22px]" fill="none" stroke="#fff" strokeWidth="1.3">
          <path d="M8 15L15 2.500q2-1.500 3.500.5L11.500 17 8 19zM6 13c-5 2-5 7-1 8s7-3 9-7 5-5 7-3-1 4-4 4" />
        </svg>
      </button>
      <svg viewBox="0 0 18 18" className="ml-3.5 size-[18px]" fill="none" stroke="#dfe3e5" strokeWidth="1.3">
        <path d="M1 17C1 8 8 1 17 1M5 17C5 10.500 10.500 5 17 5M9 17c0-4.500 3.500-8 8-8" /><path d="M13 17c0-2.500 1.500-4 4-4v4z" fill="#fff" />
      </svg>
      <svg viewBox="0 0 21 18" className="ml-5 h-[18px] w-[21px]" fill="none" stroke="#fff" strokeWidth="1.2">
        <path d="M1 6h3.500L9 2v14l-4.500-4H1zM12 7q1.500 2 0 4M15 4.500q3 4.500 0 9" /><path d="M18 2q4.500 7 0 14" stroke="#7c868b" />
      </svg>
      <svg viewBox="0 0 16 10" className="ml-[21px] h-2.5 w-4" fill="none" stroke="#fff" strokeWidth="1.5"><path d="M1 9l7-7.500L15 9" /></svg>
      <div className="ml-3 flex h-[26px] w-[62px] items-center border-3 border-white bg-black text-base">
        <span className="h-full w-1.5 bg-[#d8303a]" />
        <span className="flex-1 text-center leading-none">12%</span>
      </div>
      <span className="h-3 w-[3px] bg-white" />
      <svg viewBox="0 0 12 20" className="ml-2 h-5 w-3"><path d="M4 0h6L8 6h3l-3 4h2L2 20l2-7.500H2L3.500 7H2z" fill="#fff" /></svg>
    </div>
  );
}

function Taskbar() {
  return (
    <footer className="flex h-[50px] shrink-0 items-center overflow-hidden bg-linear-to-r from-[#1a2930] from-25% to-[#1d1d1d] to-40%">
      <Tray />
      <div className="mr-px ml-auto flex h-full">
        {pinned.map((app) => (
          <button key={app.name} type="button" aria-label={app.name} className="flex h-full w-[62px] justify-center">
            <span
              className={
                "flex w-[54px] items-center justify-center border-b-3 " +
                (app.state ? "border-[#86cfd1] " : "border-transparent ") +
                (app.state === "active" ? "mt-[11px] h-[39px] bg-[#4a4a4a] pb-2" : "h-full pt-[3px]")
              }
            >
              {app.icon}
            </span>
          </button>
        ))}
      </div>
      <div dir="rtl" className="flex h-full w-[430px] items-center gap-3 border border-[#b5b5b5] bg-[#f1f1f1] pr-[14px]">
        <svg viewBox="0 0 20 20" className="size-5" fill="none" stroke="#222" strokeWidth="1.5"><circle cx="13" cy="7" r="6" /><path d="M8.500 11.500L1 19" /></svg>
        <input type="text" aria-label="بحث" placeholder="اكتب هنا للبحث" className="min-w-0 flex-1 bg-transparent font-['DejaVu_Sans',sans-serif] text-lg placeholder:text-[#333]" />
      </div>
      <button type="button" aria-label="Start" className="flex w-[60px] justify-center text-white"><FaWindows className="size-[22px]" /></button>
    </footer>
  );
}

export default function App() {
  return (
    <div className="flex h-screen flex-col overflow-hidden">
      <header className={UI + " shrink-0"}>
        <TabStrip />
        <Toolbar />
        <BookmarksBar />
      </header>
      <div className="flex min-h-0 flex-1 overflow-hidden bg-[#e7e7e7] bg-[repeating-linear-gradient(0deg,#00000006_0_1px,transparent_1px_3px),repeating-linear-gradient(90deg,#00000006_0_1px,transparent_1px_3px)] font-['Roboto',sans-serif] text-[#555950]">
        <div className="flex min-w-0 flex-1 gap-3 pt-0.5 pr-4 pl-[15px]">
          <Palette />
          <Viewer />
          <Components />
          <Properties />
        </div>
        <PageScrollbar />
      </div>
      <div className={UI + " shrink-0"}>
        <Taskbar />
      </div>
    </div>
  );
}
